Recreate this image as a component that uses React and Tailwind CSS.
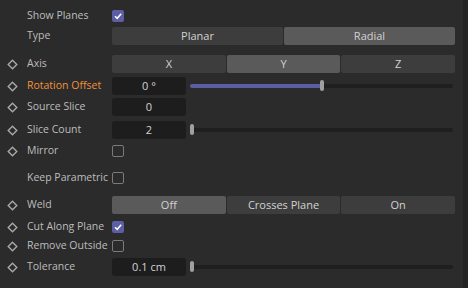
const Diamond = () => (
  <svg width="11" height="11" viewBox="0 0 11 11" className="block">
    <polygon points="5.5,1.2 9.8,5.5 5.5,9.8 1.2,5.5" fill="none" stroke="#a8a8a8" strokeWidth="1.4" />
  </svg>
)

const Check = ({ on }) =>
  on ? (
    <div className="w-[12px] h-[12px] rounded-[2px] bg-[#5c5ea6] flex items-center justify-center">
      <svg width="10" height="10" viewBox="0 0 10 10">
        <polyline points="2,5.2 4.2,7.3 8.2,2.8" fill="none" stroke="#ffffff" strokeWidth="1.5" />
      </svg>
    </div>
  ) : (
    <div className="w-[12px] h-[12px] rounded-[2px] border border-[#7a7a7a]" />
  )

const Segments = ({ items, active }) => (
  <div className="flex w-[343px] h-[18px] gap-px">
    {items.map((t, i) => (
      <div
        key={t}
        className={
          "flex-1 flex items-center justify-center rounded-[2px] text-[11px] text-[#d2d2d2] " +
          (i === active ? "bg-[#5a5a5a]" : "bg-[#3d3d3d]")
        }
      >
        {t}
      </div>
    ))}
  </div>
)

const Field = ({ value, slider }) => (
  <div className="flex items-center">
    <div className="w-[74px] h-[18px] rounded-[3px] bg-[#1d1d1d] flex items-center justify-center text-[11px] text-[#d2d2d2]">
      {value}
    </div>
    {slider !== undefined && (
      <div className="relative ml-[4px] w-[263px] h-[4px] rounded-full bg-[#1f1f1f]">
        <div className="absolute left-0 top-0 h-[4px] rounded-full bg-[#5b5da3]" style={{ width: slider }} />
        <div
          className="absolute top-[-4px] w-[4px] h-[11px] rounded-[2px] bg-[#a0a0a0]"
          style={{ left: slider === 0 ? 0 : slider - 2 }}
        />
      </div>
    )}
  </div>
)

const Row = ({ mt, diamond, label, orange, children }) => (
  <div className={"flex items-center h-[18px] " + mt}>
    <div className="w-[27px] pl-[7px] flex items-center">{diamond && <Diamond />}</div>
    <div className={"w-[85px] text-[10.5px] whitespace-nowrap " + (orange ? "text-[#f0913a]" : "text-[#bdbdbd]")}>
      {label}
    </div>
    {children}
  </div>
)

export default function App() {
  return (
    <div className="w-[468px] h-[288px] bg-[#2b2b2b] flex overflow-hidden" style={{ fontFamily: '"Open Sans", "Noto Sans", sans-serif' }}>
      <div className="flex-1 flex flex-col">
        <Row mt="mt-[7px]" label="Show Planes">
          <Check on />
        </Row>
        <Row mt="mt-[2px]" label="Type">
          <Segments items={["Planar", "Radial"]} active={1} />
        </Row>
        <Row mt="mt-[10px]" diamond label="Axis">
          <Segments items={["X", "Y", "Z"]} active={1} />
        </Row>
        <Row mt="mt-[4px]" diamond orange label="Rotation Offset">
          <Field value="0 °" slider={132} />
        </Row>
        <Row mt="mt-[3px]" diamond label="Source Slice">
          <Field value="0" />
        </Row>
        <Row mt="mt-[5px]" diamond label="Slice Count">
          <Field value="2" slider={0} />
        </Row>
        <Row mt="mt-[3px]" diamond label="Mirror">
          <Check />
        </Row>
        <Row mt="mt-[9px]" label="Keep Parametric">
          <Check />
        </Row>
        <Row mt="mt-[9px]" diamond label="Weld">
          <Segments items={["Off", "Crosses Plane", "On"]} active={0} />
        </Row>
        <Row mt="mt-[4px]" diamond label="Cut Along Plane">
          <Check on />
        </Row>
        <Row mt="mt-[1px]" diamond label="Remove Outside">
          <Check />
        </Row>
        <Row mt="mt-[3px]" diamond label="Tolerance">
          <Field value="0.1 cm" slider={0} />
        </Row>
      </div>
      <div className="w-[5px] bg-[#232323]" />
    </div>
  )
}
